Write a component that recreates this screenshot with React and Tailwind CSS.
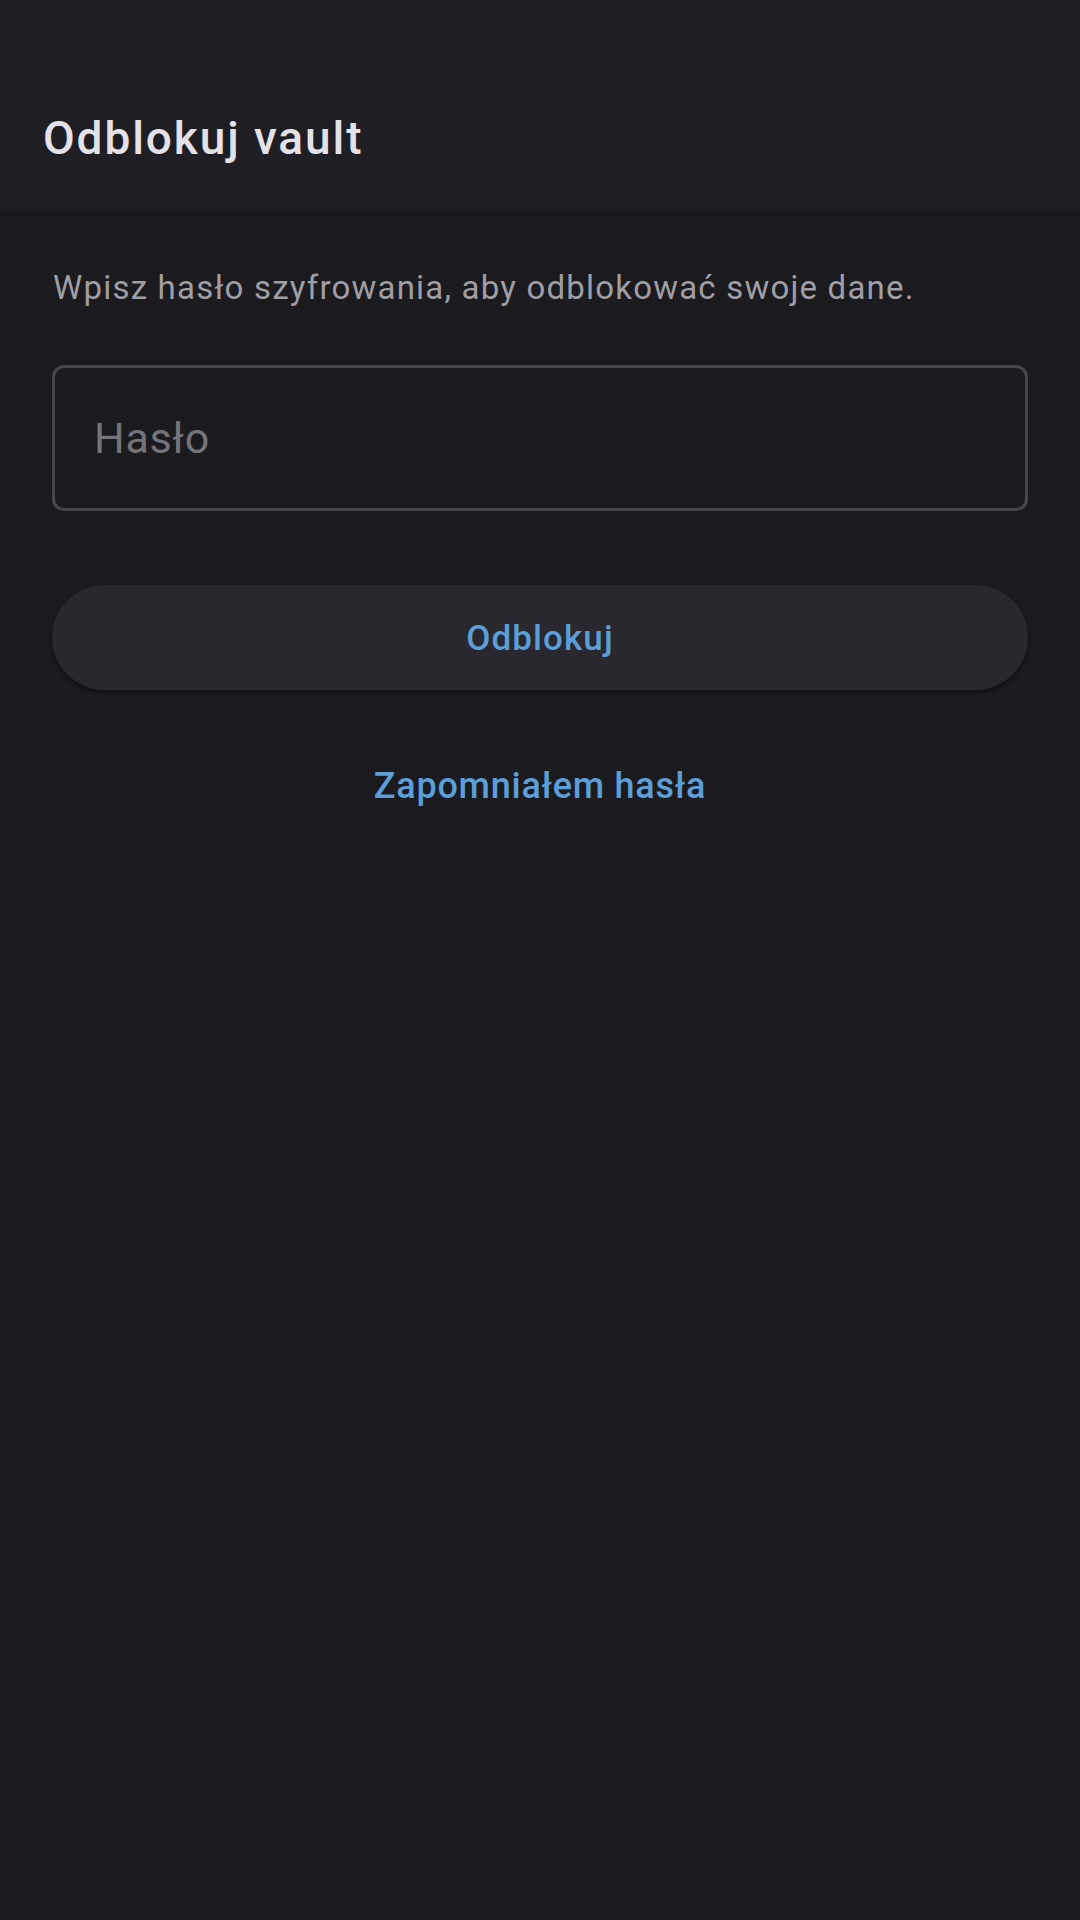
import React from 'react';

export default function App() {
  return (
    <div className="w-[1080px] min-h-[1920px] bg-[#1b1a1f]" style={{ fontFamily: 'Roboto, "Noto Sans", sans-serif' }}>
      {/* Top bar */}
      <header className="h-[210px] bg-[#1f1e24] pt-[110px] px-[43px]">
        <h1 className="text-[46px] leading-[56px] font-medium text-[#e4e2e8] tracking-[1.9px]">Odblokuj vault</h1>
      </header>

      {/* Content */}
      <main className="px-[52px] pt-[58px] flex flex-col">
        <p className="text-[33px] leading-[40px] text-[#9f9ea5] tracking-[1.2px] pl-[1px]">
          Wpisz hasło szyfrowania, aby odblokować swoje dane.
        </p>

        <input
          type="password"
          placeholder="Hasło"
          className="mt-[57px] h-[146px] w-full rounded-[12px] border-[3px] border-[#47464d] bg-transparent px-[39px] text-[43px] tracking-[0.7px] text-[#e4e2e8] placeholder:text-[#75747b] outline-none"
        />

        <button className="mt-[74px] h-[105px] w-full rounded-full bg-[#29282e] pt-[3px] text-[35px] tracking-[1.1px] font-medium text-[#5b9ed8] shadow-[0_3px_4px_rgba(0,0,0,0.35)]">
          Odblokuj
        </button>

        <button className="mt-[72px] self-center text-[36px] leading-[48px] tracking-[0.75px] font-medium text-[#5b9ed8]">
          Zapomniałem hasła
        </button>
      </main>
    </div>
  );
}
